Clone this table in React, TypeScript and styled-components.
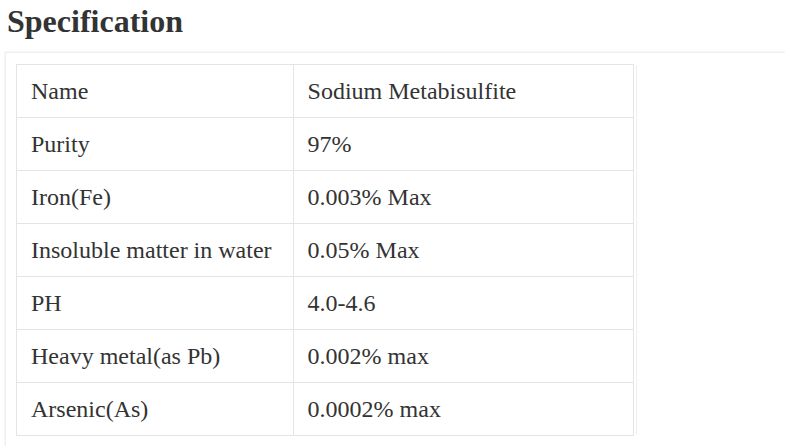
import React from "react";
import styled, { createGlobalStyle } from "styled-components";

const Global = createGlobalStyle`
  html, body { margin: 0; padding: 0; background: #fff; }
  body { font-family: "Liberation Serif", "Times New Roman", serif; color: #333; }
`;

const Page = styled.div`
  padding: 0 0 0 5px;
  width: 785px;
  box-sizing: border-box;
  font-family: "Liberation Serif", "Times New Roman", serif;
`;

const Title = styled.h2`
  margin: 0;
  padding: 3px 0 0 2px;
  height: 52px;
  box-sizing: border-box;
  font-family: "Liberation Serif", "Times New Roman", serif;
  font-size: 32px;
  line-height: 36px;
  font-weight: bold;
  color: #333;
`;

const Panel = styled.div`
  border-top: 1px solid #efefef;
  border-left: 1px solid #efefef;
  box-shadow: -1px -1px 0 #f7f7f7;
  padding: 11px 0 10px 10px;
`;

const Table = styled.table`
  border-collapse: collapse;
  width: 618px;
  font-family: "Liberation Serif", "Times New Roman", serif;
  box-shadow: 3px 0 0 -1px #fff, 4px 0 0 -1px #efefef;
`;

const Cell = styled.td<{ $w: number }>`
  width: ${(p) => p.$w}px;
  height: 53px;
  padding: 0 14px;
  border: 1px solid #e4e4e4;
  font-family: "Liberation Serif", "Times New Roman", serif;
  font-size: 24px;
  line-height: 28px;
  color: #333;
  vertical-align: middle;
  box-sizing: border-box;
`;

const rows: [string, string][] = [
  ["Name", "Sodium Metabisulfite"],
  ["Purity", "97%"],
  ["Iron(Fe)", "0.003% Max"],
  ["Insoluble matter in water", "0.05% Max"],
  ["PH", "4.0-4.6"],
  ["Heavy metal(as Pb)", "0.002% max"],
  ["Arsenic(As)", "0.0002% max"],
];

export default function App() {
  return (
    <>
      <Global />
      <Page>
        <Title>Specification</Title>
        <Panel>
          <Table>
            <tbody>
              {rows.map(([k, v]) => (
                <tr key={k}>
                  <Cell $w={277}>{k}</Cell>
                  <Cell $w={341}>{v}</Cell>
                </tr>
              ))}
            </tbody>
          </Table>
        </Panel>
      </Page>
    </>
  );
}
